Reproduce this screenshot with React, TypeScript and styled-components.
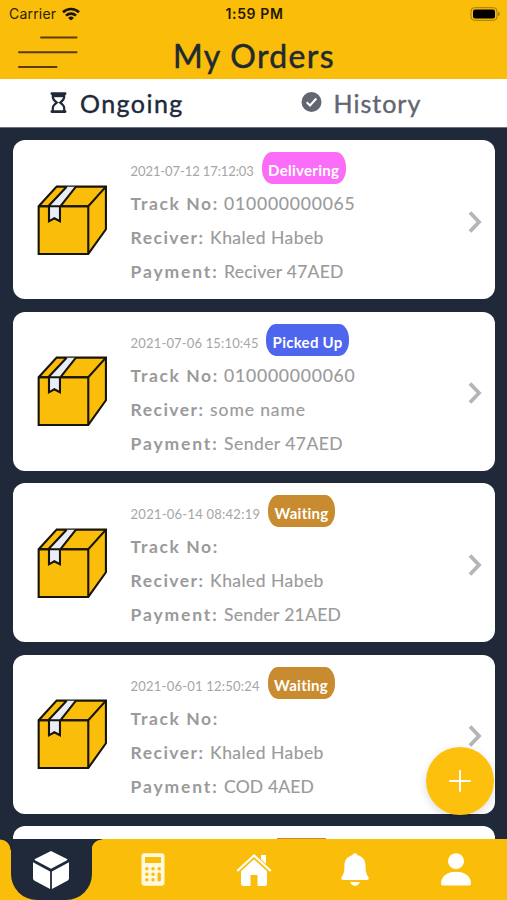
import React from "react";
import styled, { createGlobalStyle } from "styled-components";

const YELLOW = "#fabd09";
const NAVY = "#20293a";

const GlobalStyle = createGlobalStyle`
  * { box-sizing: border-box; }
  body { margin: 0; background: ${NAVY}; font-family: Lato, sans-serif; }
`;

const Screen = styled.div`
  position: relative;
  display: flex;
  flex-direction: column;
  width: 507px;
  height: 900px;
  overflow: hidden;
  background: ${NAVY};
`;

const StatusBar = styled.div`
  display: grid;
  grid-template-columns: 1fr auto 1fr;
  align-items: center;
  flex: none;
  height: 28px;
  padding: 0 7px 0 9px;
  background: ${YELLOW};
  color: #2b2104;
  font: 400 14px/28px Inter, sans-serif;
  letter-spacing: 0.2px;
`;

const Carrier = styled.div`
  display: flex;
  align-items: center;
  gap: 6px;
`;

const Clock = styled.div`
  font-weight: 600;
  letter-spacing: 0.6px;
  color: #1f1803;
`;

const Battery = styled.svg`
  justify-self: end;
`;

const Header = styled.header`
  display: grid;
  grid-template-columns: 80px 1fr 80px;
  flex: none;
  height: 51px;
  background: ${YELLOW};
`;

const MenuIcon = styled.svg`
  margin: 7px 0 0 17px;
`;

const Title = styled.h1`
  margin: 0;
  padding-left: 1px;
  text-align: center;
  color: #202a30;
  font-size: 32px;
  font-weight: 400;
  line-height: 56px;
  letter-spacing: 1.35px;
  -webkit-text-stroke: 0.5px currentColor;
`;

const Tabs = styled.div`
  display: flex;
  flex: none;
  height: 49px;
  background: #fff;
  border-bottom: 1px solid #6c7280;
`;

const Tab = styled.button<{ $active?: boolean; $tracking: number; $inset: number }>`
  display: flex;
  align-items: center;
  gap: 12px;
  width: 253.5px;
  padding: 0 0 0 ${(p) => p.$inset}px;
  border: 0;
  background: transparent;
  color: ${(p) => (p.$active ? "#20293a" : "#626671")};
  font: 400 25px/48px Lato, sans-serif;
  letter-spacing: ${(p) => p.$tracking}px;
  -webkit-text-stroke: 0.4px currentColor;
`;

const List = styled.main`
  display: flex;
  flex-direction: column;
  gap: 12.5px;
  flex: 1;
  min-height: 0;
  padding: 12px 12px 0 13px;
  overflow: hidden;
`;

const Card = styled.article`
  display: flex;
  align-items: center;
  flex: none;
  height: 159px;
  padding: 0 13px 0 24px;
  border-radius: 12px;
  background: #fff;
`;

const PeekingCard = styled(Card)`
  align-items: flex-start;
  justify-content: flex-start;
  height: 13px;
  padding: 12px 0 0 264px;
  border-radius: 12px 12px 0 0;
`;

const PeekingBadge = styled.i`
  width: 49px;
  height: 1px;
  background: #c88b30;
`;

const Details = styled.div`
  flex: 1;
  align-self: flex-start;
  padding: 12px 0 0 23px;
  color: #9a9a9a;
`;

const StampRow = styled.div`
  display: flex;
  align-items: center;
  height: 35px;
`;

const Stamp = styled.time<{ $tracking: number; $width: number }>`
  width: ${(p) => p.$width}px;
  padding-top: 3px;
  color: #a6a6a6;
  font-size: 13px;
  letter-spacing: ${(p) => p.$tracking}px;
  white-space: nowrap;
`;

const Badge = styled.span<{ $color: string }>`
  height: 32px;
  padding: 0 6.5px 0 6.5px;
  margin-bottom: 3px;
  border-radius: 10px / 15px;
  background: ${(p) => p.$color};
  color: #fff;
  font-size: 15px;
  font-weight: 700;
  line-height: 37px;
  letter-spacing: 0.27px;
`;

const Field = styled.div`
  display: flex;
  height: 34.2px;
  font-size: 17.5px;
  line-height: 34.5px;
  white-space: nowrap;
`;

const Label = styled.span<{ $width: number; $tracking: number }>`
  width: ${(p) => p.$width}px;
  font-weight: 700;
  letter-spacing: ${(p) => p.$tracking}px;
`;

const Value = styled.span<{ $tracking: number }>`
  letter-spacing: ${(p) => p.$tracking}px;
  -webkit-text-stroke: 0.15px currentColor;
`;

const Fab = styled.button`
  position: absolute;
  right: 13px;
  bottom: 85px;
  display: grid;
  place-items: center;
  width: 68px;
  height: 68px;
  padding: 0;
  border: 0;
  border-radius: 50%;
  background: #fcc00d;
  box-shadow: 0 3px 10px rgba(0, 0, 0, 0.14);
`;

const Nav = styled.nav`
  display: grid;
  grid-template-columns: repeat(5, 1fr);
  flex: none;
  height: 61px;
  background: ${YELLOW};
`;

const NavItem = styled.button`
  display: grid;
  place-items: center;
  padding: 0;
  border: 0;
  background: transparent;
`;

const ActiveItem = styled(NavItem)`
  grid-template-columns: 11px 81px 10px;
  align-items: stretch;
  justify-items: stretch;
`;

const Fillet = styled.i<{ $side: "left" | "right" }>`
  height: 11px;
  background: radial-gradient(
    circle at ${(p) => (p.$side === "left" ? "0" : "100%")} 100%,
    ${YELLOW} 10px,
    ${NAVY} 10.8px
  );
`;

const ActivePlate = styled.span`
  display: grid;
  place-items: center;
  height: 61px;
  padding-right: 1px;
  border-radius: 0 0 26px 26px;
  background: ${NAVY};
`;

const PackageIcon = styled.svg`
  flex: none;
  margin-top: 1px;
`;

const ArrowIcon = styled.svg`
  flex: none;
  margin-top: 4px;
`;

const BoxIcon = () => (
  <PackageIcon width="70.6" height="70.6" viewBox="36 29 212 212" fill={YELLOW} stroke="#17140a" strokeWidth="6.3">
    <path d="M41 93 95 34H243V162L190 236H41Z" />
    <path d="M41 93H190V236M190 93 243 34" fill="none" />
    <path d="M70 93 125 34H153L106 93V138L88 128 72 138Z" fill="#e9edf7" stroke="none" />
    <path d="M70 93 125 34M106 93 153 34M72 93V138L88 129 105 138V93M41 93H190" fill="none" />
  </PackageIcon>
);

const Chevron = () => (
  <ArrowIcon width="14" height="24" viewBox="0 0 14 24" fill="none" stroke="#b5b5b5" strokeWidth="3.8">
    <path d="M2 2.5 11 12 2 21.5" />
  </ArrowIcon>
);

type Order = {
  date: string;
  dateTracking: number;
  dateWidth: number;
  status: string;
  color: string;
  track: string;
  receiver: string;
  receiverTracking: number;
  payment: string;
  paymentTracking: number;
};

const orders: Order[] = [
  { date: "2021-07-12 17:12:03", dateTracking: -0.1, dateWidth: 131, status: "Delivering", color: "#fb6df8", track: "010000000065", receiver: "Khaled Habeb", receiverTracking: 0.45, payment: "Reciver 47AED", paymentTracking: 0.25 },
  { date: "2021-07-06 15:10:45", dateTracking: 0.16, dateWidth: 135.5, status: "Picked Up", color: "#4e66ee", track: "010000000060", receiver: "some name", receiverTracking: 0.9, payment: "Sender 47AED", paymentTracking: 0.45 },
  { date: "2021-06-14 08:42:19", dateTracking: 0.24, dateWidth: 137.5, status: "Waiting", color: "#c88b30", track: "", receiver: "Khaled Habeb", receiverTracking: 0.45, payment: "Sender 21AED", paymentTracking: 0.3 },
  { date: "2021-06-01 12:50:24", dateTracking: 0.21, dateWidth: 137, status: "Waiting", color: "#c88b30", track: "", receiver: "Khaled Habeb", receiverTracking: 0.45, payment: "COD 4AED", paymentTracking: 0.15 },
];

const OrderCard = ({ order }: { order: Order }) => (
  <Card>
    <BoxIcon />
    <Details>
      <StampRow>
        <Stamp $tracking={order.dateTracking} $width={order.dateWidth}>{order.date}</Stamp>
        <Badge $color={order.color}>{order.status}</Badge>
      </StampRow>
      <Field>
        <Label $width={93.5} $tracking={1.6}>Track No:</Label>
        <Value $tracking={0.8}>{order.track}</Value>
      </Field>
      <Field>
        <Label $width={79.5} $tracking={1.45}>Reciver:</Label>
        <Value $tracking={order.receiverTracking}>{order.receiver}</Value>
      </Field>
      <Field>
        <Label $width={93.5} $tracking={1.85}>Payment:</Label>
        <Value $tracking={order.paymentTracking}>{order.payment}</Value>
      </Field>
    </Details>
    <Chevron />
  </Card>
);

export default function App() {
  return (
    <>
      <GlobalStyle />
      <Screen>
        <StatusBar>
          <Carrier>
            Carrier
            <svg width="18" height="14" viewBox="0 0 18 14" fill="none" stroke="#1c1502" strokeWidth="2.6">
              <path d="M1 5.2a11.5 11.5 0 0 1 16 0M4 8.6a7.2 7.2 0 0 1 10 0" />
              <path d="M9 13.6 6.1 10.9a4.2 4.2 0 0 1 5.8 0Z" fill="#1c1502" stroke="none" />
            </svg>
          </Carrier>
          <Clock>1:59 PM</Clock>
          <Battery width="30" height="14" viewBox="0 0 30 14">
            <rect x="1" y="0.7" width="26" height="12.6" rx="3.5" fill="none" stroke="#a27c0c" />
            <rect x="3" y="2.6" width="22" height="8.8" rx="2" fill="#000" />
            <path d="M28.2 4.8q1.6.6 1.6 2.2t-1.6 2.2Z" fill="#a27c0c" />
          </Battery>
        </StatusBar>
        <Header>
          <MenuIcon width="61" height="36" viewBox="0 0 61 36" stroke="#5a3d05" strokeWidth="2" strokeLinecap="round">
            <path d="M24 2.4H59.5M2 17.2H59.5M2 32H39.5" />
          </MenuIcon>
          <Title>My Orders</Title>
        </Header>
        <Tabs>
          <Tab $active $tracking={1.45} $inset={50}>
            <svg width="18" height="22" viewBox="0 0 18 22" fill="none" stroke="currentColor" strokeWidth="2.2">
              <path d="M1.8 1.6H15.200M1.800 19.600H15.200" strokeLinecap="round" strokeWidth="2.6" />
              <path d="M2.8 2V5Q3 8 6.800 10.600Q3 13.200 2.8 16V19M14.2 2V5Q14 8 10.200 10.600Q14 13.200 14.2 16V19" />
              <path d="M3 3H14V5.2H3Z" fill="currentColor" stroke="none" />
            </svg>
            Ongoing
          </Tab>
          <Tab $tracking={1} $inset={47}>
            <svg width="21" height="22" viewBox="0 0 21 22">
              <circle cx="10.5" cy="10" r="10" fill="currentColor" stroke="none" />
              <path d="M5.7 10.3 9 13.5 15.3 6.500" fill="none" stroke="#fff" strokeWidth="2" />
            </svg>
            History
          </Tab>
        </Tabs>
        <List>
          {orders.map((order) => (
            <OrderCard key={order.date} order={order} />
          ))}
          <PeekingCard>
            <PeekingBadge />
          </PeekingCard>
        </List>
        <Nav>
          <ActiveItem aria-label="Orders">
            <Fillet $side="left" />
            <ActivePlate>
              <svg width="36" height="38" viewBox="0 0 36 38" fill="#fff">
                <path d="M18 0 34 8Q35 8.6 34 9.2L18 17.8 2 9.2Q1 8.6 2 8ZM0 11.300 17.100 20.500V38L1.200 29.400Q0 28.800 0 27.500ZM36 11.300 18.900 20.500V38L34.800 29.400Q36 28.800 36 27.500Z" />
              </svg>
            </ActivePlate>
            <Fillet $side="right" />
          </ActiveItem>
          <NavItem aria-label="Calculator">
            <svg width="24" height="33" viewBox="0 0 24 33">
              <rect x=".5" y=".3" width="23" height="32.4" rx="3" fill="#fff9e0" />
              <path d="M4 4H20V10H4Z" fill={YELLOW} />
              <g fill={YELLOW}>
                {[15.8, 21.3, 26.8].map((y) => [5.8, 12].map((x) => <circle key={`${x}-${y}`} cx={x} cy={y} r="1.7" />))}
                <circle cx="18.2" cy="15.8" r="1.7" />
                <rect x="16.5" y="19.6" width="3.4" height="9" rx="1.5" />
              </g>
            </svg>
          </NavItem>
          <NavItem aria-label="Home">
            <svg width="36" height="34" viewBox="0 0 36 34" fill="#fff">
              <path d="M1.2 18 18 2.5 34.8 18" fill="none" stroke="#fff" strokeWidth="2.3" />
              <path d="M25 2H30V11L25 6.500ZM5 18.3 18 6.3 31 18.3V31Q31 33 29 33H21.5V22H14.5V33H7Q5 33 5 31Z" />
            </svg>
          </NavItem>
          <NavItem aria-label="Notifications">
            <svg width="28" height="33" viewBox="0 0 28 33" fill="#fff">
              <path d="M14 0.3C15.500 .3 16.200 1 16.600 2.300C22 3.500 24.600 7.500 24.600 13C24.600 19 25.500 21.500 27.300 24C28.400 26 27.500 27 26 27H2C.5 27-.4 26 .7 24C2.500 21.500 3.400 19 3.400 13C3.400 7.500 6 3.500 11.400 2.300C11.800 1 12.500 .3 14 .3Z" />
              <path d="M9 29H19Q17.5 32.7 14 32.7T9 29Z" />
            </svg>
          </NavItem>
          <NavItem aria-label="Profile">
            <svg width="30" height="33" viewBox="0 0 30 33" fill="#fff">
              <circle cx="15" cy="8.2" r="8" />
              <path d="M0 30.5C0 23.500 6 18.7 15 18.7S30 23.5 30 30.5Q30 32.5 28.3 32.5H1.7Q0 32.5 0 30.5Z" />
            </svg>
          </NavItem>
        </Nav>
        <Fab aria-label="Add order">
          <svg width="22" height="22" viewBox="0 0 22 22" stroke="#fff" strokeWidth="2" strokeLinecap="round">
            <path d="M11 1V21M1 11H21" />
          </svg>
        </Fab>
      </Screen>
    </>
  );
}
